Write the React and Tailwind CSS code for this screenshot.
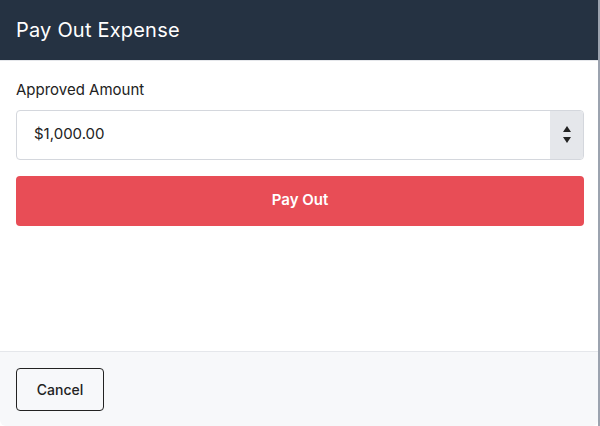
export default function App() {
  return (
    <div className="flex h-[426px] w-[600px] bg-white font-['Inter',sans-serif]">
      <div className="flex w-[598px] flex-col overflow-hidden rounded-b-md bg-white">
        <div className="flex h-[61px] items-center border-b border-[#e5e7eb] bg-[#253242] px-4">
          <h2 className="text-[20px] tracking-[0.2px] text-white">Pay Out Expense</h2>
        </div>

        <div className="flex flex-1 flex-col pl-4 pr-[14px] pt-[18px]">
          <label className="mb-[8px] text-[15px] text-[#222]">Approved Amount</label>
          <div className="flex h-[50px] overflow-hidden rounded-[4px] border border-[#d4d7dd]">
            <input
              className="flex-1 px-[17px] text-[15px] text-[#222] outline-none"
              defaultValue="$1,000.00"
              readOnly
            />
            <div className="flex w-[33px] flex-col items-center justify-center gap-[5px] bg-[#e5e7eb]">
              <svg width="8" height="6" viewBox="0 0 8 6"><path d="M4 0L8 6H0z" fill="#222" /></svg>
              <svg width="8" height="6" viewBox="0 0 8 6"><path d="M0 0h8L4 6z" fill="#222" /></svg>
            </div>
          </div>
          <button className="mt-4 h-[50px] w-full rounded-[4px] bg-[#e84d56] text-[15px] font-semibold text-white">
            Pay Out
          </button>
        </div>

        <div className="flex h-[75px] items-center border-t border-[#e5e7eb] bg-[#f7f8fa] px-4">
          <button className="h-[43px] w-[88px] rounded-[4px] border border-[#222] text-[14px] font-medium text-[#222]">
            Cancel
          </button>
        </div>
      </div>
      <div className="w-[2px] bg-[#9ca3af]" />
    </div>
  );
}
